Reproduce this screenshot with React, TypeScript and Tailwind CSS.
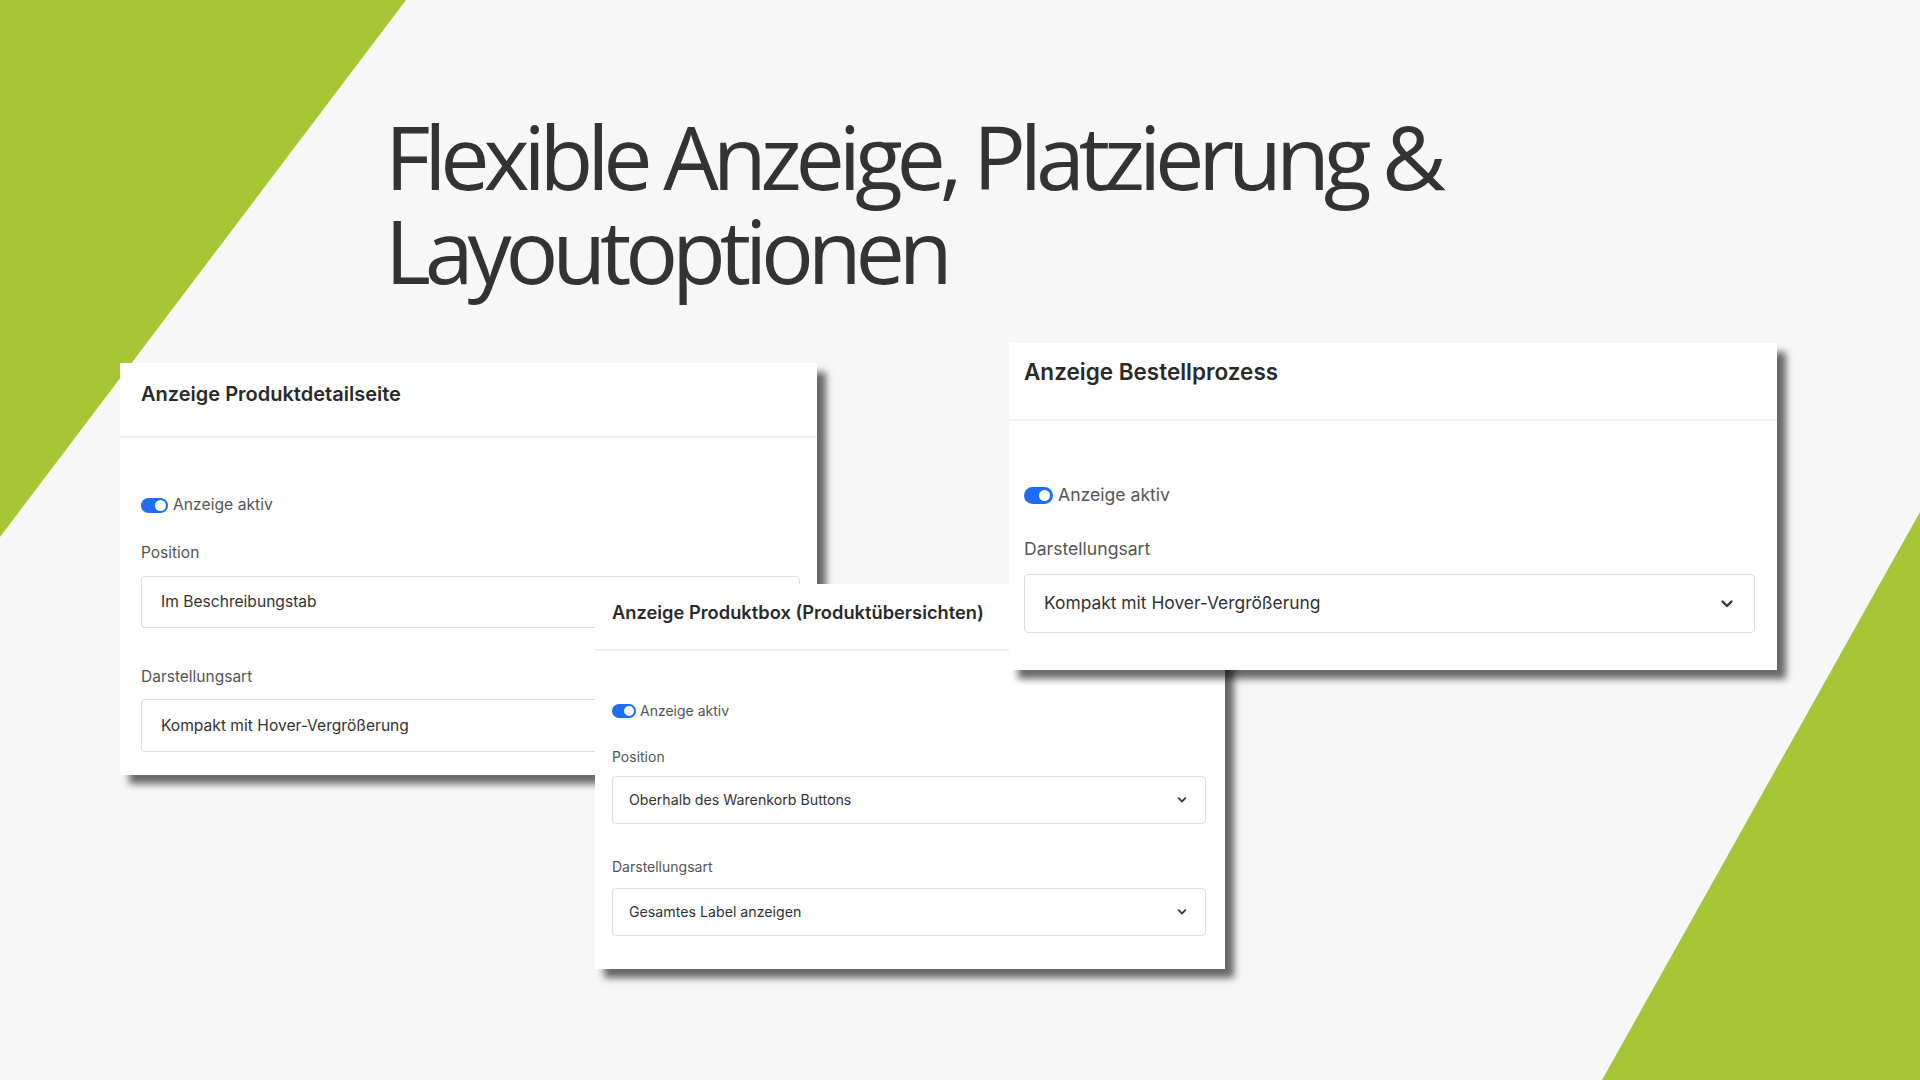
import React from "react";

const uiFont = { fontFamily: "Inter, 'Noto Sans', sans-serif" };
const titleFont = { fontFamily: "'Open Sans', 'Noto Sans', sans-serif" };

function Chevron({ className }: { className: string }) {
  return (
    <svg viewBox="0 0 12 8" className={className} fill="none">
      <path
        d="M1.6 1.6 L6 6 L10.4 1.6"
        stroke="#3a3a3a"
        strokeWidth="2.4"
        strokeLinecap="round"
        strokeLinejoin="round"
      />
    </svg>
  );
}

function Toggle({ className, knob }: { className: string; knob: string }) {
  return (
    <span className={`flex shrink-0 items-center justify-end rounded-full bg-[#1c6ef2] ${className}`}>
      <span className={`rounded-full bg-white ${knob}`} />
    </span>
  );
}

function DetailCard() {
  return (
    <div className="absolute left-[120px] top-[363px] h-[412px] w-[697px] bg-white shadow-[9px_9px_7px_rgba(0,0,0,0.58)]">
      <div className="h-[75px] border-b-2 border-[#efefef] pl-[21px] pt-[18px]">
        <h2 className="text-[20px] font-semibold leading-[26px] text-[#2a2a2a]">Anzeige Produktdetailseite</h2>
      </div>
      <div className="pl-[21px] pr-[17px]">
        <div className="mt-[57px] flex h-[20px] items-center gap-[5px]">
          <Toggle className="h-[15px] w-[27px] px-[2px]" knob="h-[11px] w-[11px]" />
          <span className="text-[15.7px] leading-[20px] text-[#555]">Anzeige aktiv</span>
        </div>
        <div className="mt-[28px] text-[15.5px] leading-[20px] text-[#555]">Position</div>
        <div className="mt-[13px] flex h-[52px] items-center justify-between rounded-[4px] border border-[#dedede] pl-[19px] pr-[20px] text-[15.6px] text-[#333]">
          <span>Im Beschreibungstab</span>
          <Chevron className="h-[7px] w-[11px]" />
        </div>
        <div className="mt-[39px] text-[15.5px] leading-[20px] text-[#555]">Darstellungsart</div>
        <div className="mt-[12px] flex h-[53px] items-center justify-between rounded-[4px] border border-[#dedede] pl-[19px] pr-[20px] text-[15.6px] text-[#333]">
          <span>Kompakt mit Hover-Vergrößerung</span>
          <Chevron className="h-[7px] w-[11px]" />
        </div>
      </div>
    </div>
  );
}

function BoxCard() {
  return (
    <div className="absolute left-[595px] top-[584px] h-[385px] w-[630px] bg-white shadow-[9px_9px_7px_rgba(0,0,0,0.58)]">
      <div className="h-[67px] border-b-2 border-[#efefef] pl-[17px] pt-[16px]">
        <h2 className="text-[18.3px] font-semibold leading-[24px] text-[#2a2a2a]">
          Anzeige Produktbox (Produktübersichten)
        </h2>
      </div>
      <div className="pl-[17px] pr-[19px]">
        <div className="mt-[51px] flex h-[18px] items-center gap-[4px]">
          <Toggle className="h-[14px] w-[24px] px-[2px]" knob="h-[10px] w-[10px]" />
          <span className="text-[14px] leading-[18px] text-[#555]">Anzeige aktiv</span>
        </div>
        <div className="mt-[28px] text-[14px] leading-[18px] text-[#555]">Position</div>
        <div className="mt-[10px] flex h-[48px] items-center justify-between rounded-[4px] border border-[#dedede] pl-[16px] pr-[18px] text-[14.2px] text-[#333]">
          <span>Oberhalb des Warenkorb Buttons</span>
          <Chevron className="h-[6px] w-[10px]" />
        </div>
        <div className="mt-[34px] text-[14px] leading-[18px] text-[#555]">Darstellungsart</div>
        <div className="mt-[12px] flex h-[48px] items-center justify-between rounded-[4px] border border-[#dedede] pl-[16px] pr-[18px] text-[14.2px] text-[#333]">
          <span>Gesamtes Label anzeigen</span>
          <Chevron className="h-[6px] w-[10px]" />
        </div>
      </div>
    </div>
  );
}

function CheckoutCard() {
  return (
    <div className="absolute left-[1009px] top-[343px] h-[327px] w-[768px] bg-white shadow-[9px_9px_7px_rgba(0,0,0,0.58)]">
      <div className="h-[78px] border-b-2 border-[#efefef] pl-[15px] pt-[15px]">
        <h2 className="text-[22.5px] font-semibold leading-[28px] text-[#2a2a2a]">Anzeige Bestellprozess</h2>
      </div>
      <div className="pl-[15px] pr-[22px]">
        <div className="mt-[63px] flex h-[22px] items-center gap-[5px]">
          <Toggle className="h-[17px] w-[29px] px-[3px]" knob="h-[11px] w-[11px]" />
          <span className="text-[17.6px] leading-[22px] text-[#555]">Anzeige aktiv</span>
        </div>
        <div className="mt-[32px] text-[17.6px] leading-[22px] text-[#555]">Darstellungsart</div>
        <div className="mt-[14px] flex h-[59px] items-center justify-between rounded-[4px] border border-[#dedede] pl-[19px] pr-[21px] text-[17.4px] text-[#333]">
          <span>Kompakt mit Hover-Vergrößerung</span>
          <Chevron className="h-[8px] w-[12px]" />
        </div>
      </div>
    </div>
  );
}

export default function App() {
  return (
    <div className="relative h-[1080px] w-[1920px] overflow-hidden bg-[#f7f7f7]">
      <svg className="absolute inset-0" width="1920" height="1080" viewBox="0 0 1920 1080">
        <polygon points="0,0 406,0 0,537" fill="#a6c636" />
        <polygon points="1920,512 1920,1080 1602,1080" fill="#a6c636" />
      </svg>

      <div className="relative pl-[385px] pt-[109px]" style={titleFont}>
        <h1 className="w-[1120px] text-[88px] font-normal leading-[94px] tracking-[-0.07em] text-[#333333]">
          Flexible Anzeige, Platzierung &amp; Layoutoptionen
        </h1>
      </div>

      <div style={uiFont}>
        <DetailCard />
        <BoxCard />
        <CheckoutCard />
      </div>
    </div>
  );
}
